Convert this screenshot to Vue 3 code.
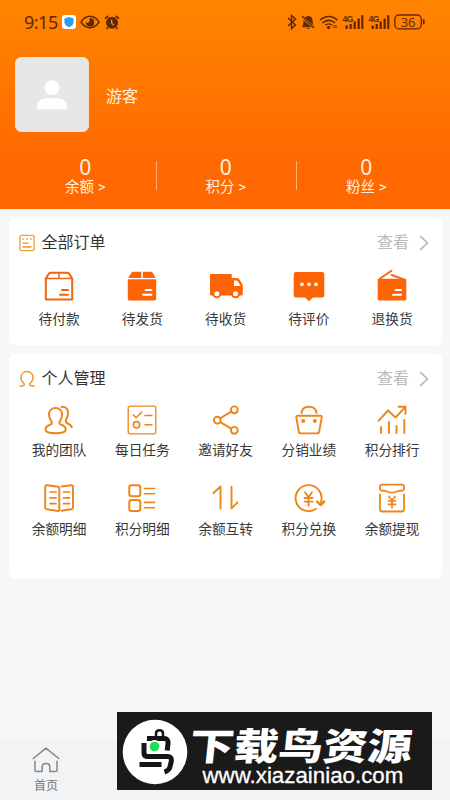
<script setup>
const stats = [
  { value: 0, label: '余额' },
  { value: 0, label: '积分' },
  { value: 0, label: '粉丝' },
]
const orders = [
  { icon: 'pay', label: '待付款' },
  { icon: 'send', label: '待发货' },
  { icon: 'truck', label: '待收货' },
  { icon: 'comment', label: '待评价' },
  { icon: 'refund', label: '退换货' },
]
const tools = [
  { icon: 'team', label: '我的团队' },
  { icon: 'task', label: '每日任务' },
  { icon: 'share', label: '邀请好友' },
  { icon: 'bag', label: '分销业绩' },
  { icon: 'rank', label: '积分排行' },
  { icon: 'book', label: '余额明细' },
  { icon: 'list', label: '积分明细' },
  { icon: 'swap', label: '余额互转' },
  { icon: 'exchange', label: '积分兑换' },
  { icon: 'withdraw', label: '余额提现' },
]
</script>

<template>
  <main class="page">
    <header class="hero">
      <div class="status">
        <span class="time">9:15</span>
        <svg class="s-shield" width="14" height="14" viewBox="0 0 14 14">
          <rect width="14" height="14" rx="3" fill="#fff" />
          <path d="M7 2 11.6 3.600V7c0 2.600-2 4.200-4.600 5.200C4.400 11.200 2.400 9.600 2.400 7V3.600Z" fill="#2f9df0" />
        </svg>
        <svg class="s-eye" width="20" height="14" viewBox="0 0 20 14">
          <path d="M1 7.200C3.500 3 6.500 1.300 10 1.300S16.500 3 19 7.200C16.500 11 13.500 12.700 10 12.700S3.500 11 1 7.200Z" fill="none" stroke="#612800" stroke-width="1.500" />
          <path d="M10 3a4.200 4.200 0 1 1-4.200 4.300c1.500 1 3.700.3 3.900-1.500C9.900 4.500 9.200 3.600 10 3Z" fill="#612800" />
        </svg>
        <svg class="s-alarm" width="16" height="15" viewBox="0 0 16 15">
          <g fill="none" stroke="#612800" stroke-width="1.700"><path d="M1 3.600 4.200 1M15 3.600 11.800 1M3.800 12.500 2.500 14M12.200 12.500l1.300 1.500" /></g>
          <circle cx="8" cy="7.800" r="6" fill="#612800" />
          <path d="M7.600 4.500V8l2.300 2.300" fill="none" stroke="#ff8b20" stroke-width="1.300" />
        </svg>
        <span class="fill"></span>
        <svg width="165" height="18" viewBox="0 0 165 18" class="signals">
          <g fill="none" stroke="#612800" stroke-width="1.500">
            <path d="m4 5 7.500 7-4 3.500v-13l4 3.500L4 13" />
            <path d="m18 3 12 12" stroke-width="1.400" />
            <path d="M36 7.200c5-5 12.500-5 17.500 0M38.500 10c3.500-3.500 9-3.500 12.500 0" stroke-width="1.600" />
            <path d="M41.200 12.300c2-1.900 5-1.900 7 0" stroke-width="1.500" />
            <rect x="110.800" y="2" width="26.500" height="13.800" rx="4" stroke-width="1.300" />
          </g>
          <path d="M19.600 7 27.500 14.200H18c1.500-2 1.200-4.500 1.600-7.200ZM20.800 4.800c1-1 2.300-1.500 3.700-1.700 3 .3 4.200 2.600 4.200 5.400 0 1.800.4 3 1.200 4.200ZM22.500 15h3.500l-1.700 1.300Z" fill="#612800" />
          <circle cx="44.600" cy="14.500" r="1.700" fill="#8d1a00" />
          <path d="M49 12.800h4M49 14.300h4" stroke="#8b3c04" stroke-width="1" />
          <g fill="#612800">
            <path d="M61.500 12.500h2.300V16h-2.300zM65.500 11h2.300v5h-2.300zM69.500 8.500h2.300V16h-2.300zM73.500 5.500h2.300V16h-2.300zM77.200 2.200h2.200V16h-2.200z" />
            <path d="M87.500 12.500h2.300V16h-2.300zM91.500 11h2.300v5h-2.300zM95.500 8.500h2.300V16h-2.300zM99.500 5.500h2.300V16h-2.300zM103.200 2.200h2.200V16h-2.200z" />
            <rect x="138.800" y="6.200" width="1.800" height="5" rx=".8" />
            <text x="58.500" y="8.600" class="net">4G</text>
            <text x="84.500" y="8.600" class="net">4G</text>
            <text x="116.700" y="13.600" class="battery">36</text>
          </g>
        </svg>
      </div>

      <div class="profile">
        <div class="avatar">
          <svg width="30" height="30" viewBox="0 0 30 30" fill="#fff">
            <circle cx="15" cy="7.700" r="7.400" />
            <path d="M.3 29.500v-4.300c0-4.400 4.700-7 9.500-7h10.400c4.800 0 9.500 2.600 9.500 7v4.300Z" />
          </svg>
        </div>
        <span class="name">游客</span>
      </div>

      <div class="stats">
        <div v-for="s in stats" :key="s.label" class="stat">
          <span class="value">{{ s.value }}</span>
          <span class="caption">{{ s.label }} <span class="gt">&gt;</span></span>
        </div>
      </div>
    </header>

    <section class="card orders">
      <div class="card-head">
        <svg width="16" height="18" viewBox="0 0 16 18" fill="none" stroke="#f0a044" stroke-width="1.400" stroke-linecap="round">
          <rect x=".9" y="1.400" width="14.200" height="15.200" rx="1.800" />
          <path d="M4 4.800v.5M8 4.800v.5M12 4.800v.5M4 9.300h5M4 12.900h8" stroke-width="1.600" />
        </svg>
        <h2>全部订单</h2>
        <span class="more">查看</span>
        <svg class="chev" width="10" height="16" viewBox="0 0 10 16"><path d="m1.200 1.200 7.300 6.800-7.300 6.800" /></svg>
      </div>
      <div class="grid">
        <div v-for="o in orders" :key="o.label" class="item">
          <svg class="icon" width="34" height="34" viewBox="0 0 34 34">
            <g v-if="o.icon === 'pay'" fill="none" stroke="#f0640f" stroke-width="2" stroke-linejoin="round">
              <path d="M3.800 9.500V30.500H30.200V9.500L27 4.500Q26.500 3.700 25.500 3.700H8.500Q7.500 3.700 7 4.500Z" />
              <path d="M4 9.500H30M17 4v5.500" stroke-width="1.500" />
              <path d="M20 21h6M18 25.800h8" stroke-width="1.900" stroke-linecap="round" />
            </g>
            <g v-else-if="o.icon === 'send'">
              <path d="M2.800 10.300V30q0 1.400 1.400 1.400h25.600q1.400 0 1.400-1.400V10.300ZM3.200 9 6.400 3.800Q7.100 2.700 8.500 2.700h7.800V9ZM17.900 2.700h7.700q1.400 0 2.100 1.100L30.800 9H17.900Z" fill="#fc6405" />
              <path d="M20.500 21h6M18 25.700h8.500" stroke="#fff" stroke-width="1.900" stroke-linecap="round" />
            </g>
            <g v-else-if="o.icon === 'truck'">
              <path d="M1.500 4.900h20.300q1 0 1 1v3h5.500q1 0 1.600.8l3.300 5q.6.800.6 2v8.500q0 1.400-1.400 1.400H2.500q-1.500 0-1.500-1.500V6q0-1.100.5-1.100Z" fill="#fc6405" />
              <path d="M25 11.500v5.500h6.700l-3.500-5.500Z" fill="#fff" />
              <g fill="#fff" stroke="#fc6405" stroke-width="2"><circle cx="7.800" cy="24.800" r="3.500" /><circle cx="26.500" cy="24.800" r="3.500" /></g>
            </g>
            <g v-else-if="o.icon === 'comment'">
              <path d="M4 3h26q2.300 0 2.300 2.300v21q0 2.300-2.300 2.300H21l-4 3.700-4-3.700H4q-2.300 0-2.300-2.300v-21Q1.700 3 4 3Z" fill="#fc6405" />
              <g fill="#fff"><circle cx="10" cy="15.300" r="1.900" /><circle cx="17" cy="15.300" r="1.900" /><circle cx="24" cy="15.300" r="1.900" /></g>
            </g>
            <g v-else>
              <path d="M2.700 10.800Q2.700 9.800 3.600 9.800H30.400q.9 0 .9.900V30q0 1.400-1.400 1.400H4.100q-1.400 0-1.400-1.400Z" fill="#fc6405" />
              <path d="M5 9.500 16.500 1.800M16.700 6 28.700 10.300" stroke="#fc6405" stroke-width="1.900" stroke-linecap="round" />
              <path d="M20.500 21h5.700M18 25.700h8.200" stroke="#fff" stroke-width="1.900" stroke-linecap="round" />
            </g>
          </svg>
          <span class="label">{{ o.label }}</span>
        </div>
      </div>
    </section>

    <section class="card tools">
      <div class="card-head">
        <svg width="16" height="18" viewBox="0 0 16 18" fill="none" stroke="#f0933a" stroke-width="1.500" stroke-linecap="round">
          <path d="M1 16.200c2.600 0 4.300-.8 4.300-1.900 0-.8-.8-1.300-1.600-2.200A6.200 6.200 0 0 1 2 7.700C2 4 4.500 1.500 8 1.500S14 4 14 7.700a6.200 6.200 0 0 1-1.700 4.400c-.8.900-1.600 1.400-1.600 2.200 0 1.100 1.700 1.900 4.300 1.900" />
        </svg>
        <h2>个人管理</h2>
        <span class="more">查看</span>
        <svg class="chev" width="10" height="16" viewBox="0 0 10 16"><path d="m1.200 1.200 7.300 6.800-7.300 6.800" /></svg>
      </div>
      <div class="grid">
        <div v-for="t in tools" :key="t.label" class="item">
          <svg class="icon line" width="34" height="34" viewBox="0 0 34 34">
            <g v-if="t.icon === 'team'" stroke-width="2">
              <path d="M13.500 5c-4 0-6.500 2.800-6.500 6.500 0 3.500 1.300 5 2.500 6.900 1 1.600.2 2.700-1.500 3.300C4.800 22.800 3.500 24.500 3.500 26.500c0 2.800 4.500 3.700 10 3.700s10.300-.9 10.300-3.700c0-2.300-1.500-3.700-4.500-4.800-1.700-.6-2.500-1.700-1.500-3.300 1.200-1.900 2.200-3.400 2.200-6.900 0-3.700-2.500-6.500-6.500-6.500Z" />
              <path d="M19.500 4c4-.8 6.600 2 6.600 5.800s-1.500 5.500-2.100 7.300c-.7 2.200.4 3 2.300 3.700 2 .8 3.100 1.700 3.500 3.500" />
            </g>
            <g v-else-if="t.icon === 'task'" stroke-width="1.300">
              <rect x="3.200" y="3.200" width="27.600" height="27.600" rx="1.800" />
              <path d="m8.200 11.800 3 3 5.600-5.800M20 12.500h7M20 21.800h7" stroke-width="1.500" />
              <circle cx="11.500" cy="21.800" r="3.200" stroke-width="1.600" />
            </g>
            <g v-else-if="t.icon === 'share'" stroke-width="1.900">
              <circle cx="8.300" cy="17.200" r="3.400" /><circle cx="25.300" cy="6.800" r="3.400" /><circle cx="25.300" cy="27.300" r="3.400" />
              <path d="m11.300 15.300 10.900-6.700M11.300 19.100l10.900 6.500" />
            </g>
            <g v-else-if="t.icon === 'bag'" stroke-width="1.900">
              <path d="M5.500 12.800h23q1.500 0 1.200 1.500l-2.500 14.200q-.3 1.900-2.200 1.900H9q-1.900 0-2.200-1.900L4.300 14.300Q4 12.800 5.500 12.800ZM9.500 10C10 6.200 13 3.800 17 3.800S24 6.200 24.500 10" />
              <g fill="#ef8418" stroke="none"><circle cx="11.200" cy="17.900" r="2" /><circle cx="22.800" cy="17.900" r="2" /></g>
            </g>
            <g v-else-if="t.icon === 'rank'" stroke-width="1.900">
              <path d="m3.500 17.800 9.500-10.300 7.500 7L30 4.300M23.500 3.800h7v7M6 30v-6M14 30V19M21.500 30v-7M29.300 30V17" />
            </g>
            <g v-else-if="t.icon === 'book'" stroke-width="1.900">
              <path d="M5.200 4.200q-2-.3-2 1.700v20.500q0 1.600 1.500 1.800L16.300 30q1 .1 1-1V7.200q0-1.200-1.200-1.400ZM19.500 5.500 29 4.200q2-.3 2 1.700v20.500q0 1.600-1.500 1.800L19.300 29.700" />
              <path d="M8 11h6M8 16.800h6M8 22.700h6M21.500 11h6M21.500 16.800h6M21.500 22.700h6" stroke-width="1.700" />
            </g>
            <g v-else-if="t.icon === 'list'" stroke-width="2">
              <rect x="4.300" y="4.200" width="11" height="11" rx="2.300" /><rect x="4.300" y="19" width="11" height="11" rx="2.300" />
              <path d="M19.500 7.500h10M19.500 12.800h10M19.500 21.400h10M19.500 26.700h10" stroke-width="1.600" />
            </g>
            <g v-else-if="t.icon === 'swap'" stroke-width="1.900"><path d="m4.500 12 7-6.500v22M22.500 5.800v21.500l6-6" /></g>
            <g v-else-if="t.icon === 'exchange'" stroke-width="1.900">
              <path d="M24 27.800A13 13 0 1 1 29 21" />
              <path d="m25 20.500 3.500 3.500 3.800-3.500" stroke-width="2.400" />
              <path d="m13 11.300 3.500 5 3.500-5M16.500 16.500v8.300M12.500 17h8M12.500 20.700h8" stroke-width="1.800" />
            </g>
            <g v-else stroke-width="1.800">
              <path d="M7 3.700h20q2 0 2 2V8q0 1.500-1.500 1.500-4 .1-6.300 1.200-4.200 2-8.400 0-2.300-1.100-6.300-1.200Q5 9.500 5 8V5.700q0-2 2-2ZM5 13.500v14.800q0 2.200 2.200 2.200h19.600q2.200 0 2.200-2.200V13.500" />
              <path d="m14 15.500 3 4 3-4M17 19.500v7.200M13.500 20h7M13.500 23.300h7" stroke-width="1.700" />
            </g>
          </svg>
          <span class="label">{{ t.label }}</span>
        </div>
      </div>
    </section>

    <nav class="tabbar">
      <div class="tab">
        <svg width="28" height="26" viewBox="0 0 28 26" fill="none" stroke="#85878a" stroke-width="1.500" stroke-linecap="round" stroke-linejoin="round">
          <path d="M1.300 11.500 14 1.200l12.700 10.300M3 14.300v9q0 1.300 1.300 1.300h5.900v-4.800q0-3.300 3.800-3.300t3.800 3.300v4.800h5.900q1.300 0 1.300-1.300v-9" />
        </svg>
        <span>首页</span>
      </div>
    </nav>

    <aside class="banner">
      <svg class="logo" width="66" height="66" viewBox="0 0 66 66">
        <circle cx="33" cy="33" r="32.300" fill="#fff" />
        <g fill="none" stroke="#151515" stroke-width="5">
          <path d="M25 19.500h17q4.500 0 4 5l-.8 7M22 24v10q0 3.500 4 3.500h19.500q4.500 0 3.800 5L48 47.500q-.5 4-5.500 5.500M17.500 45.500h22" />
          <path d="M34 17.500v-3q0-3.300 3.500-3.300t3.500 3.300v3" stroke-width="2.500" />
        </g>
        <circle cx="32.500" cy="27.500" r="6.500" fill="#fff" />
        <circle cx="32.500" cy="27.500" r="4.800" fill="#20dc5c" />
      </svg>
      <div class="brand">
        <strong>下载鸟资源</strong>
        <span>www.xiazainiao.com</span>
      </div>
    </aside>
  </main>
</template>

<style>
body { margin: 0; background: #f7f7f7; }
</style>

<style scoped>
* { box-sizing: border-box; }
.page { position: relative; width: 450px; height: 800px; overflow: hidden; display: flex; flex-direction: column; background: #f7f7f7; font-family: Roboto, "Noto Sans CJK SC", sans-serif; }
.hero { height: 208.500px; flex: none; background: linear-gradient(#ff8500, #ff6900 78%, #ff6800); color: #fff1df; }
.status { height: 44px; padding: 0 10px 0 24px; display: flex; align-items: center; color: #612800; }
.time { width: 37px; font: 18px/20px "Noto Sans", sans-serif; letter-spacing: -.5px; white-space: nowrap; }
.s-shield { margin-left: 1px; }
.s-eye { margin-left: 4px; }
.s-alarm { margin-left: 4px; }
.fill { flex: 1; }
.net { font: bold 8.500px "Liberation Sans", sans-serif; letter-spacing: -.5px; }
.battery { font: 13px "Open Sans", sans-serif; }
.signals { margin-right: -8.500px; }
.profile { display: flex; align-items: center; gap: 17px; padding: 13px 15px 0; }
.avatar { width: 74px; height: 75px; border-radius: 6px; border: 1px solid #f6ddc9; background: #e7e7e7; display: flex; align-items: center; justify-content: center; }
.name { font-size: 16px; line-height: 20px; margin-top: 4px; }
.stats { display: grid; grid-template-columns: repeat(3, 140.500px); padding: 24px 0 0 15px; }
.stat { position: relative; display: flex; flex-direction: column; align-items: center; }
.stat + .stat::before { content: ""; position: absolute; left: 0; top: 5px; height: 29px; width: 1px; background: #ffb27a; }
.value { font: 21px/22px "Noto Sans", sans-serif; }
.caption { font-size: 14.500px; line-height: 18px; }
.gt { font-size: 15px; }
.card { margin: 0 8px 0 9px; background: #fff; border-radius: 6px; flex: none; padding: 0 9px; }
.orders { margin-top: 9.500px; height: 127px; }
.tools { margin-top: 9px; height: 224.500px; }
.card-head { height: 48px; display: flex; align-items: center; padding: 1px 4px 0 1px; }
h2 { margin: 0 0 0 6.500px; flex: 1; font-size: 16px; line-height: 20px; font-weight: 400; color: #333; }
.more { color: #bbb; font-size: 16px; line-height: 20px; }
.chev { margin-left: 10px; fill: none; stroke: #b5b5b5; stroke-width: 1.600; }
.grid { display: grid; grid-template-columns: repeat(5, 83.250px); margin-left: -.500px; row-gap: 9px; }
.item { height: 70px; display: flex; flex-direction: column; align-items: center; }
.orders .icon { margin-top: 3px; }
.icon { flex: none; }
.line { fill: none; stroke: #ef8418; stroke-linecap: round; stroke-linejoin: round; }
.label { font-size: 13.700px; line-height: 20px; color: #383838; margin-top: 6px; white-space: nowrap; }
.tools .label { margin-top: 3px; }
.tools .item:nth-child(n+6) .icon { margin: -1px 0 1px; }
.tools .card-head { height: 49px; }
.tabbar { margin-top: auto; height: 61px; flex: none; background: #f2f3f5; display: flex; padding-left: 16px; }
.tab { width: 60px; display: flex; flex-direction: column; align-items: center; padding-top: 8px; color: #777; font-size: 12px; line-height: 16px; gap: 5px; }
.banner { position: absolute; left: 117px; top: 712px; width: 315px; height: 78px; background: #1a1a1a; display: flex; align-items: center; padding-left: 4.500px; color: #fff; }
.logo { flex: none; margin-top: 2px; }
.brand { display: flex; flex-direction: column; padding: 10px 0 0 2px; align-self: stretch; }
.brand strong { font: 900 44.500px/44px "Noto Sans CJK SC", sans-serif; height: 43px; white-space: nowrap; transform: scaleY(.84) skewX(-5deg); }
.brand span { font: 22.300px/22px "Liberation Sans", sans-serif; margin-left: 13px; white-space: nowrap; -webkit-text-stroke: .3px #fff; }
</style>
